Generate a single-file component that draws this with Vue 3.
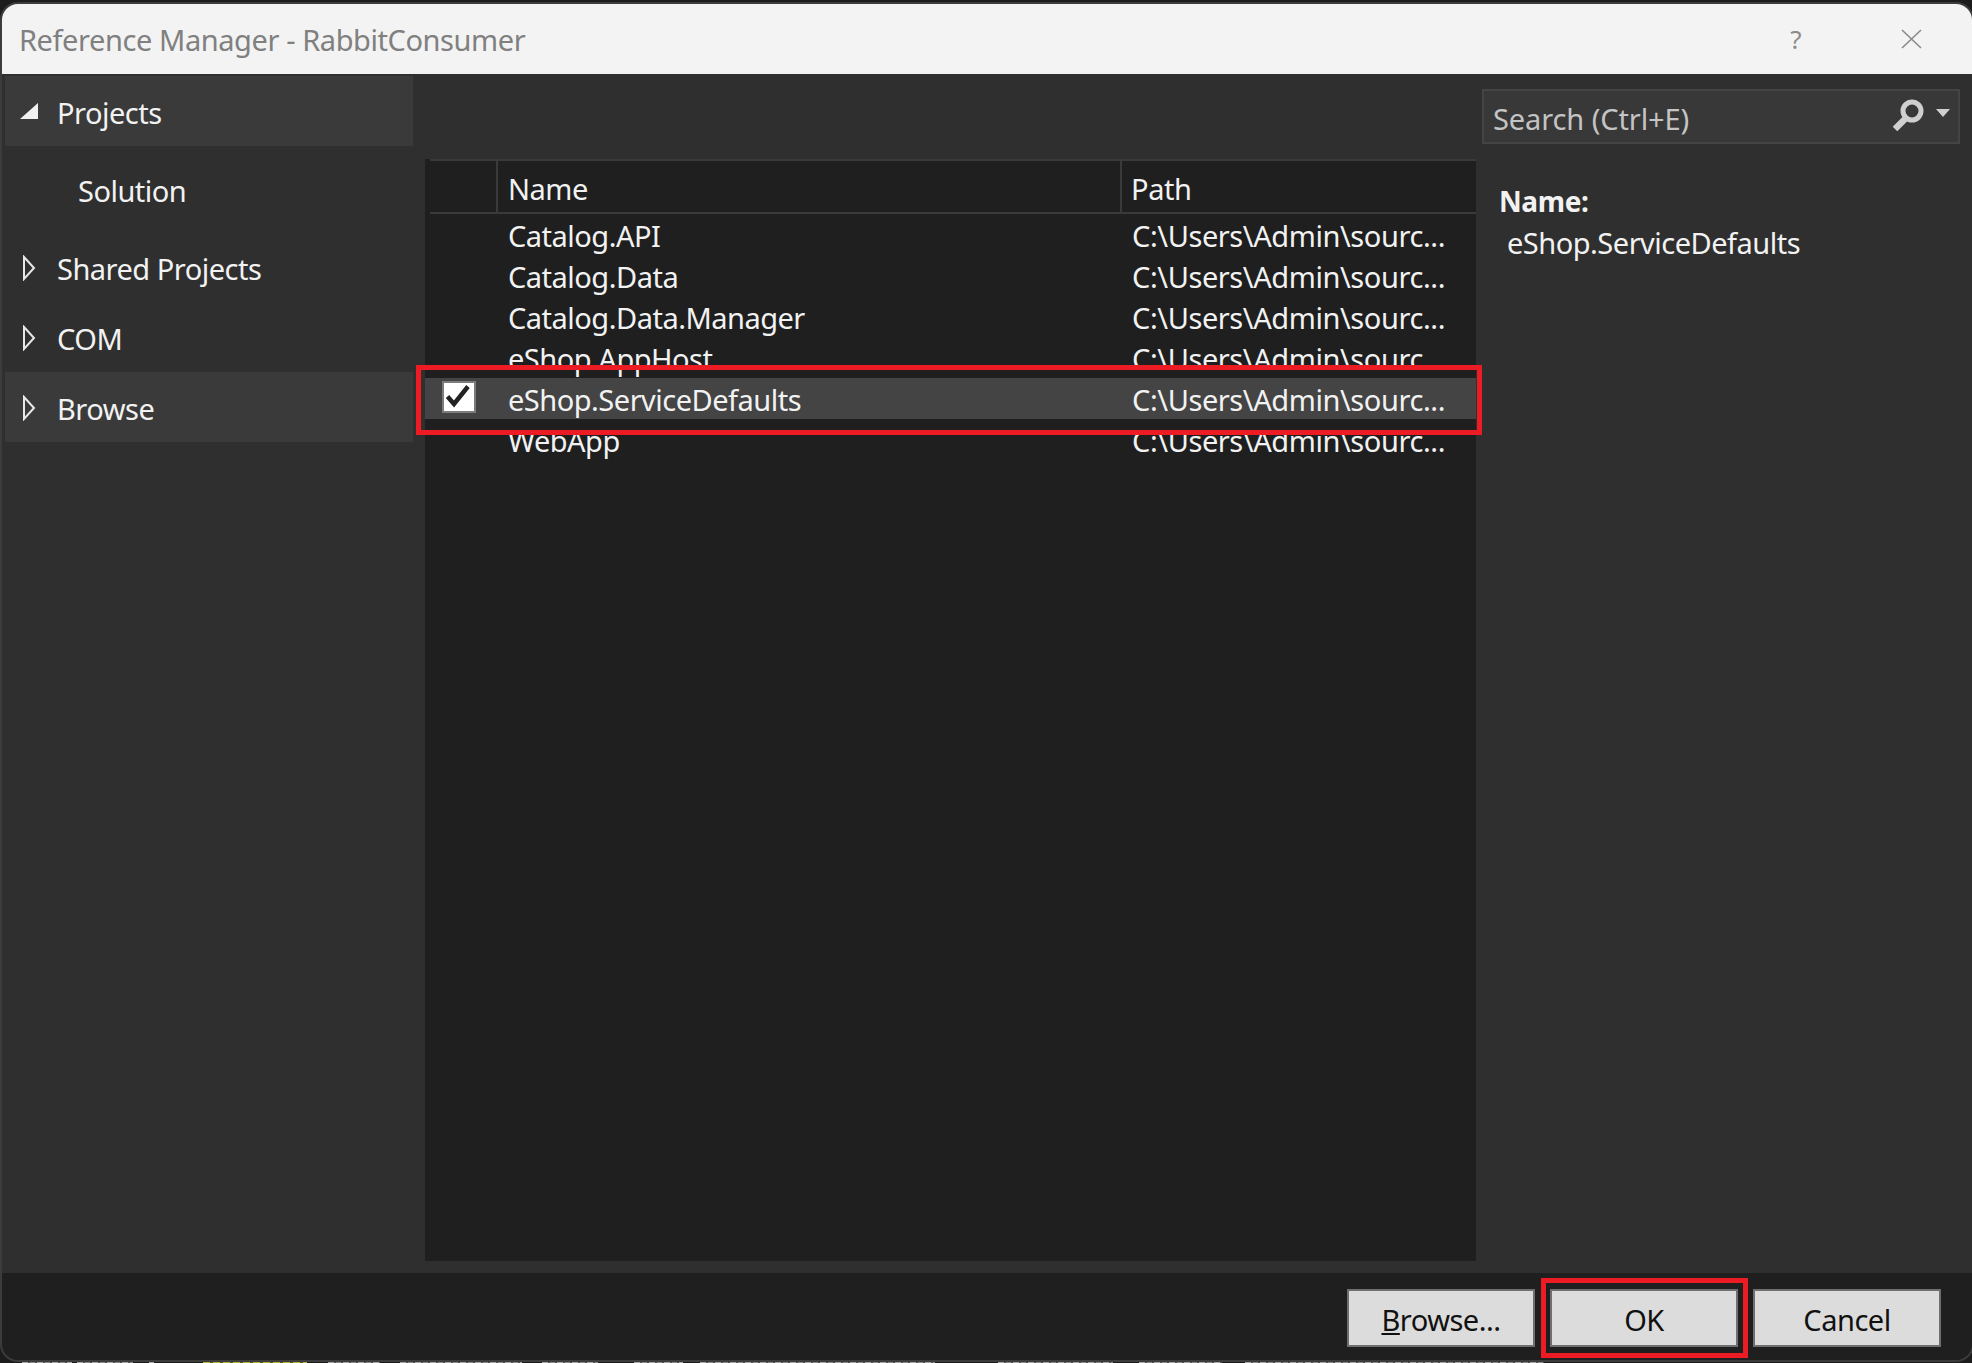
<script setup>
const path = 'C:\\Users\\Admin\\sourc...'
const projects = [
  { name: 'Catalog.API', path },
  { name: 'Catalog.Data', path },
  { name: 'Catalog.Data.Manager', path },
  { name: 'eShop.AppHost', path },
  { name: 'eShop.ServiceDefaults', path, checked: true },
  { name: 'WebApp', path }
]

// editor window peeking out under the dialog, only the top pixels of its letters show
const peek = [
  { x: 22, w: 50 }, { x: 77, w: 56 }, { x: 149, w: 5 },
  { x: 203, w: 104, olive: true }, { x: 328, w: 52 }, { x: 400, w: 122 },
  { x: 542, w: 56 }, { x: 634, w: 49 }, { x: 700, w: 235 },
  { x: 998, w: 115 }, { x: 1139, w: 83 }, { x: 1245, w: 299 }
]
</script>

<template>
  <div class="page">
    <div class="dialog">
      <header class="titlebar">
        <span class="title">Reference Manager - RabbitConsumer</span>
        <span class="help">?</span>
        <svg class="close" width="21" height="20" viewBox="0 0 21 20">
          <path d="M1 1 L20 19 M20 1 L1 19" stroke="#8a8a8a" stroke-width="1.6" fill="none" />
        </svg>
      </header>

      <div class="body">
        <aside class="side">
          <div class="node active">
            <svg class="caret-open" width="18" height="16" viewBox="0 0 18 16"><path d="M18 0 V16 H0 Z" fill="#f0f0f0" /></svg>
            <span>Projects</span>
          </div>
          <div class="node sub"><span>Solution</span></div>
          <div class="node">
            <svg class="caret" width="16" height="26" viewBox="0 0 16 26"><path d="M2 2 L12 13 L2 24 Z" fill="none" stroke="#e8e8e8" stroke-width="2" /></svg>
            <span>Shared Projects</span>
          </div>
          <div class="node">
            <svg class="caret" width="16" height="26" viewBox="0 0 16 26"><path d="M2 2 L12 13 L2 24 Z" fill="none" stroke="#e8e8e8" stroke-width="2" /></svg>
            <span>COM</span>
          </div>
          <div class="node active">
            <svg class="caret" width="16" height="26" viewBox="0 0 16 26"><path d="M2 2 L12 13 L2 24 Z" fill="none" stroke="#e8e8e8" stroke-width="2" /></svg>
            <span>Browse</span>
          </div>
        </aside>

        <main class="list">
          <div class="thead">
            <div class="th check-col"></div>
            <div class="th name-col">Name</div>
            <div class="th path-col">Path</div>
          </div>
          <div
            v-for="p in projects"
            :key="p.name"
            class="row"
            :class="{ selected: p.checked }"
          >
            <div class="check-col">
              <span v-if="p.checked" class="checkbox">
                <svg width="30" height="28" viewBox="0 0 30 28">
                  <path d="M3.5 13.5 L10 21 L24 3.5" fill="none" stroke="#222" stroke-width="4.5" />
                </svg>
              </span>
            </div>
            <div class="name-col">{{ p.name }}</div>
            <div class="path-col">{{ p.path }}</div>
          </div>
          <div class="mark mark-row"></div>
        </main>

        <section class="info">
          <div class="search">
            <span>Search (Ctrl+E)</span>
            <svg class="lens" width="34" height="34" viewBox="0 0 34 34">
              <circle cx="20" cy="13" r="9" fill="none" stroke="#cfcfcf" stroke-width="5" />
              <path d="M14 20 L3 31" stroke="#cfcfcf" stroke-width="6.5" fill="none" />
            </svg>
            <svg class="drop" width="14" height="8" viewBox="0 0 14 8"><path d="M0 0 H14 L7 8 Z" fill="#cfcfcf" /></svg>
          </div>
          <div class="info-label">Name:</div>
          <div class="info-value">eShop.ServiceDefaults</div>
        </section>
      </div>

      <footer class="actions">
        <button class="btn"><u>B</u>rowse...</button>
        <button class="btn ok">OK<span class="mark mark-ok"></span></button>
        <button class="btn">Cancel</button>
      </footer>
    </div>
    <div class="behind">
      <i
        v-for="s in peek"
        :key="s.x"
        :class="{ olive: s.olive }"
        :style="{ left: s.x + 'px', width: s.w + 'px' }"
      ></i>
    </div>
  </div>
</template>

<style>
html, body { margin: 0; background: #1c1c1c; }
</style>

<style scoped>
.page {
  width: 1972px;
  height: 1363px;
  position: relative;
  overflow: hidden;
  background: #1c1c1c;
  font-family: "Noto Sans", "Open Sans", sans-serif;
  font-size: 29px;
  letter-spacing: -0.5px;
  color: #f2f2f2;
  display: flex;
  flex-direction: column;
  padding: 4px 0 0 2px;
  box-sizing: border-box;
}
.dialog {
  width: 1970px;
  height: 1356px;
  border-radius: 16px;
  overflow: hidden;
  display: flex;
  flex-direction: column;
  background: #2f2f2f;
  position: relative;
  z-index: 1;
  flex: none;
  box-shadow: 0 0 0 2px #3c3c3c;
}
.titlebar {
  height: 70px;
  flex: none;
  background: #f3f3f3;
  display: flex;
  align-items: center;
  padding: 0 50px 0 17px;
  color: #808080;
  letter-spacing: -0.42px;
}
.title { flex: 1; }
.help { margin-right: 100px; font-size: 26px; color: #8a8a8a; }
.body {
  flex: 1;
  display: flex;
  min-height: 0;
  padding-top: 2px;
}
.side {
  width: 411px;
  flex: none;
  padding-left: 3px;
  box-sizing: border-box;
}
.node {
  height: 70px;
  display: flex;
  align-items: center;
  padding: 3px 0 0 52px;
  box-sizing: border-box;
  position: relative;
}
.node.active { background: #3a3a3a; }
.node.sub { padding-left: 73px; height: 86px; }
.caret { position: absolute; left: 17px; top: 23px; }
.caret-open { position: absolute; left: 15px; top: 27px; }
.list {
  width: 1051px;
  margin: 83px 0 12px 12px;
  background: #1f1f1f;
  flex: none;
  position: relative;
}
.thead {
  height: 55px;
  box-sizing: border-box;
  margin-left: 5px;
  display: flex;
  border-top: 2px solid #3a3a3a;
  border-bottom: 2px solid #3a3a3a;
}
.th { display: flex; align-items: center; padding-top: 3px; }
.check-col { width: 66px; flex: none; display: flex; align-items: center; justify-content: center; }
.name-col { width: 624px; flex: none; padding-left: 12px; box-sizing: border-box; }
.path-col { flex: 1; padding-left: 12px; letter-spacing: -0.42px; }
.th.name-col,
.th.path-col { border-left: 2px solid #3a3a3a; padding-left: 10px; }
.th.path-col { padding-left: 9px; }
.row {
  height: 41px;
  box-sizing: border-box;
  padding-top: 3px;
  display: flex;
  align-items: center;
  margin-left: 5px;
  line-height: 38px;
  white-space: nowrap;
}
.row.selected { background: #444; margin-left: 0; padding-left: 5px; }
.checkbox {
  width: 30px;
  height: 28px;
  border: 2px solid #7c7c7c;
  background: #fff;
  display: flex;
  margin: -6px 8px 0 0;
}
.mark { position: absolute; border: 5px solid #ed1c24; box-sizing: border-box; pointer-events: none; }
.mark-row { left: -9px; top: 206px; width: 1066px; height: 70px; }
.info {
  flex: 1;
  padding: 13px 12px 0 6px;
  min-width: 0;
}
.search {
  height: 55px;
  box-sizing: border-box;
  background: #383838;
  border: 2px solid #444;
  display: flex;
  align-items: center;
  padding: 0 6px 0 9px;
  color: #c4c4c4;
  letter-spacing: -0.1px;
}
.search span { flex: 1; padding-top: 3px; }
.lens { margin-right: 10px; margin-top: -4px; }
.drop { margin-right: 2px; margin-top: -8px; }
.info-label { font-weight: 700; margin: 39px 0 0 17px; font-size: 28px; line-height: 37px; letter-spacing: -0.4px; }
.info-value { margin: 4px 0 0 25px; line-height: 37px; }
.actions {
  height: 87px;
  flex: none;
  background: #1f1f1f;
  display: flex;
  justify-content: flex-end;
  align-items: flex-start;
  gap: 15px;
  padding: 16px 31px 0 0;
  box-sizing: border-box;
}
.btn {
  width: 188px;
  height: 58px;
  background: #dcdcdc;
  border: 2px solid #6f6f6f;
  font: inherit;
  letter-spacing: -0.5px;
  color: #111;
  padding: 2px 0 0;
  position: relative;
}
.mark-ok { left: -11px; top: -13px; width: 207px; height: 80px; }
.behind {
  position: absolute;
  left: 0;
  right: 0;
  top: 1361px;
  height: 2px;
}
.behind i {
  position: absolute;
  top: 0;
  height: 2px;
  background: repeating-linear-gradient(90deg, #a8a8a8 0 6px, #555 6px 8px, #8c8c8c 8px 13px, #4a4a4a 13px 15px);
}
.behind i.olive {
  background: repeating-linear-gradient(90deg, #b5b83a 0 7px, #55561f 7px 10px);
}
</style>
